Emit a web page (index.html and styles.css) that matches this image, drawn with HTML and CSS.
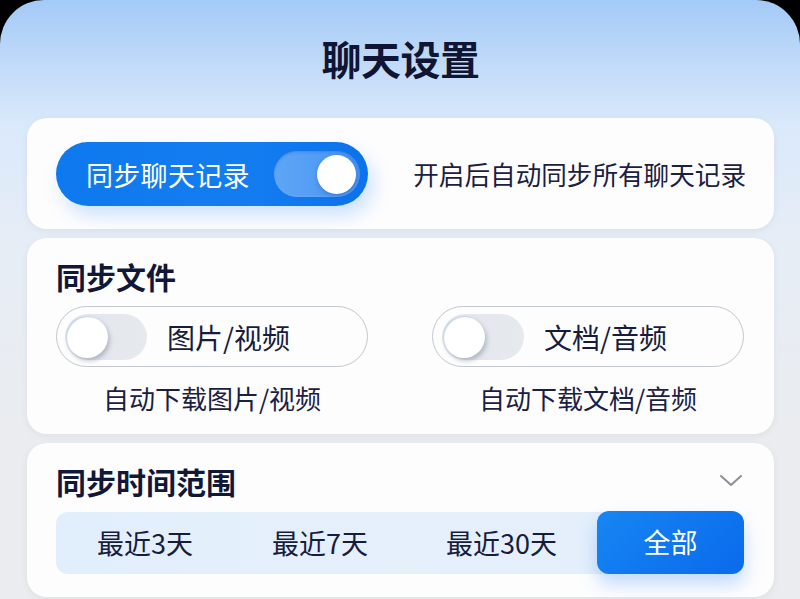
FILE: index.html
```html
<!DOCTYPE html>
<html lang="zh-CN">
<head>
<meta charset="utf-8">
<title>聊天设置</title>
<link rel="stylesheet" href="styles.css">
</head>
<body>
<div class="screen">
  <header class="header"><h1 class="title">聊天设置</h1></header>

  <section class="card card-sync">
    <div class="main-toggle">
      <span class="main-label">同步聊天记录</span>
      <span class="main-track"><span class="main-knob"></span></span>
    </div>
    <p class="desc">开启后自动同步所有聊天记录</p>
  </section>

  <section class="card card-files">
    <h2 class="heading">同步文件</h2>
    <div class="file-grid">
      <div class="file-col">
        <div class="pill">
          <span class="track"><span class="knob"></span></span>
          <span class="pill-label">图片/视频</span>
        </div>
        <p class="sub">自动下载图片/视频</p>
      </div>
      <div class="file-col">
        <div class="pill pill-right">
          <span class="track"><span class="knob"></span></span>
          <span class="pill-label">文档/音频</span>
        </div>
        <p class="sub">自动下载文档/音频</p>
      </div>
    </div>
  </section>

  <section class="card card-range">
    <div class="range-head">
      <h2 class="heading">同步时间范围</h2>
      <svg class="chevron" width="24" height="14" viewBox="0 0 24 14"><path d="M2 2 L12 11 L22 2" fill="none" stroke="#8b8f97" stroke-width="2" stroke-linecap="round" stroke-linejoin="round"/></svg>
    </div>
    <div class="segments">
      <span class="seg">最近3天</span>
      <span class="seg">最近7天</span>
      <span class="seg">最近30天</span>
      <span class="seg seg-active">全部</span>
    </div>
  </section>
</div>
</body>
</html>
```

FILE: styles.css
```css
* { box-sizing: border-box; margin: 0; padding: 0; }
html, body { width: 800px; height: 599px; overflow: hidden; }
body {
  background: #000;
  font-family: "Noto Sans CJK SC", "Noto Sans", sans-serif;
  color: #161c3c;
}
.screen {
  width: 800px;
  height: 599px;
  border-radius: 44px 44px 0 0;
  overflow: hidden;
  background: linear-gradient(180deg, #a3caf6 0px, #c3dcf9 70px, #dae9fb 125px, #e6edf6 240px, #eaecf0 420px, #ebecef 599px);
  padding: 0 26px 0 27px;
}
.header {
  height: 118px;
  display: flex;
  align-items: center;
  justify-content: center;
  padding-bottom: 2px;
}
.title {
  font-size: 40px;
  font-weight: 700;
  color: #0f1533;
  line-height: 1;
  letter-spacing: -0.5px;
}
.card {
  background: #fdfdfe;
  border-radius: 20px;
  box-shadow: 0 2px 6px rgba(120, 130, 150, 0.10);
}
.card + .card { margin-top: 9px; }

/* card 1 */
.card-sync {
  height: 111px;
  display: flex;
  align-items: center;
  justify-content: space-between;
  padding: 0 28px 0 29px;
}
.main-toggle {
  width: 312px;
  height: 64px;
  border-radius: 32px;
  background: linear-gradient(90deg, #0e78ee 0%, #137df0 60%, #0c72eb 100%);
  box-shadow: 6px 10px 18px rgba(40, 130, 240, 0.22);
  display: flex;
  align-items: center;
  justify-content: space-between;
  padding: 0 8px 0 30px;
  margin-top: 1px;
}
.main-label {
  color: #fff;
  font-size: 27px;
  line-height: 1;
  letter-spacing: 0.3px;
}
.main-track {
  width: 86px;
  height: 46px;
  border-radius: 23px;
  background: linear-gradient(90deg, #5ea6f6, #4793f3);
  box-shadow: inset 0 1px 3px rgba(0, 60, 160, 0.25), inset 0 -1px 2px rgba(255,255,255,0.15);
  display: flex;
  align-items: center;
  justify-content: flex-end;
  padding-right: 4px;
}
.main-knob {
  width: 39px;
  height: 39px;
  border-radius: 50%;
  background: #fff;
  box-shadow: 0 2px 4px rgba(0, 50, 140, 0.25);
}
.desc {
  font-size: 25.6px;
  line-height: 1;
  color: #1a2040;
}

/* card 2 */
.card-files {
  height: 196px;
  padding: 20px 30px 0 29px;
}
.heading {
  font-size: 30px;
  font-weight: 600;
  line-height: 36px;
  color: #111736;
}
.file-grid {
  display: grid;
  grid-template-columns: 312px 312px;
  column-gap: 64px;
  margin-top: 12px;
}
.file-col {
  display: flex;
  flex-direction: column;
  align-items: center;
}
.pill {
  width: 312px;
  height: 61px;
  border: 1px solid #c3c7ce;
  border-radius: 31px;
  display: flex;
  align-items: center;
  padding-left: 8px;
}
.pill-right { padding-left: 9px; }
.track {
  width: 82px;
  height: 46px;
  border-radius: 23px;
  background: linear-gradient(90deg, #e2e6ec, #e6e9ee);
  display: flex;
  align-items: center;
  padding-left: 1px;
}
.knob {
  width: 42px;
  height: 42px;
  border-radius: 50%;
  background: #fff;
  box-shadow: inset 1px 1px 1px rgba(120, 150, 200, 0.45), 2px 3px 4px rgba(90, 100, 120, 0.35);
}
.pill-label {
  font-size: 28px;
  line-height: 1;
  margin-left: 20px;
  color: #161c3c;
}
.sub {
  font-size: 26px;
  line-height: 32px;
  margin-top: 15px;
  color: #1a2042;
}

/* card 3 */
.card-range {
  height: 154px;
  padding: 20px 30px 0 29px;
}
.range-head {
  display: flex;
  align-items: center;
  justify-content: space-between;
}
.chevron { margin-right: 1px; margin-top: 0px; }
.segments {
  margin-top: 13px;
  height: 62px;
  border-radius: 12px;
  background: linear-gradient(90deg, #e1eefc, #e6f0fb 50%, #e3eefb);
  display: grid;
  grid-template-columns: 178px 172px 191px 147px;
  align-items: center;
}
.seg {
  text-align: center;
  font-size: 27px;
  line-height: 62px;
  color: #161c3c;
}
.seg-active {
  height: 63px;
  margin-top: -1px;
  border-radius: 12px;
  background: linear-gradient(135deg, #1786f3 0%, #0f76ee 55%, #0a6aec 100%);
  color: #fff;
  box-shadow: 0 10px 18px rgba(40, 130, 240, 0.28);
}
```
